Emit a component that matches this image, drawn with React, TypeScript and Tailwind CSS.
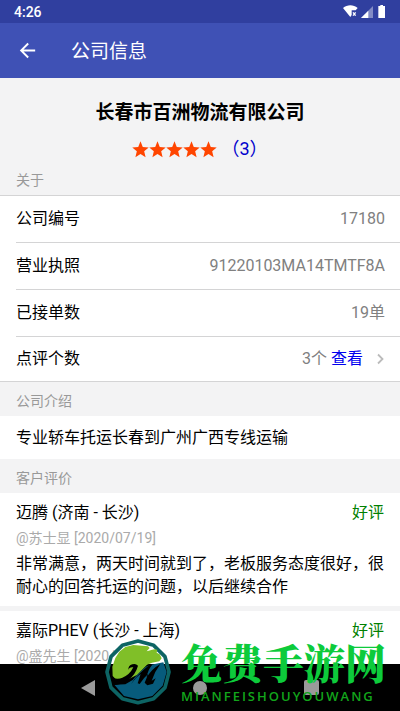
import type { ReactNode } from 'react'

interface Review {
  route: string
  author: string
  rating: string
  text?: string
}

const reviews: Review[] = [
  {
    route: '迈腾 (济南 - 长沙)',
    author: '@苏士显 [2020/07/19]',
    rating: '好评',
    text: '非常满意，两天时间就到了，老板服务态度很好，很耐心的回答托运的问题，以后继续合作',
  },
  {
    route: '嘉际PHEV (长沙 - 上海)',
    author: '@盛先生 [2020/07/18]',
    rating: '好评',
  },
]

function StatusBar() {
  return (
    <div className="flex h-[23px] shrink-0 items-center justify-between bg-[#303f9f] pr-2.5 pl-3.5 text-sm font-medium text-white">
      <span>4:26</span>
      <div className="flex items-center gap-[3px]">
        <svg width="15" height="13" viewBox="0 0 45 39" fill="#fff">
          <path d="M0 9C13-2 31-2 44 9L38 16H26V30L22 36Z" />
          <path d="M30 22l8 10M38 22l-8 10" stroke="#fff" strokeWidth="4" />
        </svg>
        <svg width="12" height="12" viewBox="0 0 36 36" fill="#fff">
          <path d="M36 0V36H0Z" opacity="0.4" />
          <path d="M22 14V36H0Z" />
        </svg>
        <svg width="14" height="13" viewBox="0 0 42 39" fill="#fff">
          <path d="M13 0h8v3h6v36H7V3h6z" />
        </svg>
      </div>
    </div>
  )
}

function AppBar() {
  return (
    <header className="flex h-[55px] shrink-0 items-center gap-8 bg-[#3f51b5] pl-4 text-white">
      <button aria-label="返回" className="flex size-[23px] items-center justify-center">
        <svg width="23" height="23" viewBox="0 0 24 24" fill="#fff">
          <path d="M20 11H7.83l5.59-5.59L12 4l-8 8 8 8 1.41-1.41L7.83 13H20v-2z" />
        </svg>
      </button>
      <h1 className="pt-1 text-[19px]">公司信息</h1>
    </header>
  )
}

function Stars() {
  return (
    <div className="flex">
      {[1, 2, 3, 4, 5].map((n) => (
        <svg key={n} width="17" height="17" viewBox="0 0 24 24" fill="#ff4500">
          <path d="M12 0.5l3.2 7.8 8.4.7-6.4 5.5 2 8.3L12 18.3l-7.2 4.5 2-8.3L.4 9l8.4-.7z" />
        </svg>
      ))}
    </div>
  )
}

function InfoRow({ label, children }: { label: string; children: ReactNode }) {
  return (
    <div className="ml-4 flex h-[47px] items-center justify-between border-b border-[#d4d4d5] pr-[15px] text-base last:h-11 last:border-b-0">
      <dt>{label}</dt>
      <dd className="flex items-center text-[#808080]">{children}</dd>
    </div>
  )
}

function SectionLabel({ children }: { children: ReactNode }) {
  return (
    <h3 className="flex h-[34px] items-center px-4 pt-1 text-sm text-[#999]">{children}</h3>
  )
}

function ReviewItem({ review }: { review: Review }) {
  return (
    <article className="bg-white px-4 pt-2 pb-2">
      <div className="flex justify-between text-base leading-6">
        <h4>{review.route}</h4>
        <span className="text-[#008000]">{review.rating}</span>
      </div>
      <p className="text-sm leading-[27px] text-[#aaa]">{review.author}</p>
      {review.text && <p className="text-base leading-[23px]">{review.text}</p>}
    </article>
  )
}

function NavBar() {
  return (
    <nav className="flex h-[47px] shrink-0 items-center justify-between bg-black px-[81px]">
      <button aria-label="后退">
        <svg width="15" height="16" viewBox="0 0 15 16" fill="#9a9a9a">
          <path d="M14 0v16L0 8z" />
        </svg>
      </button>
      <button aria-label="主页" className="size-3.5 rounded-full bg-[#9a9a9a]" />
      <button aria-label="最近任务" className="size-[15px] rounded-xs bg-[#9a9a9a]" />
    </nav>
  )
}

function Logo() {
  return (
    <svg width="66" height="66" viewBox="9 9 198 198">
      {/* backing: light above, dark below */}
      <path d="M27 84L27 62 61 28 108 15 155 28 189 62 195 84Z" fill="#fff" />
      <path d="M21 84H195L201 108 189 155 155 188 108 200 61 188 27 155 15 108Z" fill="#000" />
      <path
        d="M108 15L155 28 189 62 201 108 189 155 155 188 108 200 61 188 27 155 15 108 27 62 61 28Z"
        fill="none"
        stroke="#0d6464"
        strokeWidth="11"
        strokeLinejoin="round"
      />
      <path
        d="M32 120L31 92 40 66 52 47 70 33 94 27 138 31 143 36 134 46 157 40 166 41 164 50 173 55 179 67 172 76 150 80 135 86 106 116 82 128 40 128Z"
        fill="#80bf28"
      />
      <path
        d="M148 86L184 79 194 108 182 149 151 180 108 190 66 180 37 146 70 145 92 132 104 118 132 92Z"
        fill="#075b7c"
      />
      <g fill="#000">
        <path d="M31 124Q44 134 61 125 83 117 94 94 82 92 79 102 78 89 91 85 101 81 108 89 101 115 79 132 60 146 31 148Z" />
        <path d="M87 145Q101 119 145 85L151 86Q137 101 134 124 150 98 175 84 159 105 149 134L161 127 153 143 136 148 128 140 139 113Q126 124 113 144L107 142 116 114Q104 121 87 145Z" />
      </g>
    </svg>
  )
}

function Watermark() {
  return (
    <div className="pointer-events-none absolute right-3.5 bottom-1.5 flex items-end gap-2.5">
      <Logo />
      <div className="flex flex-col whitespace-nowrap">
        <span className="font-['Noto_Serif_CJK_SC','Noto_Sans_CJK_SC',serif] text-[41px] leading-[50px] font-black text-[#0dcb3b]">
          免费手游网
        </span>
        <span className="font-['Open_Sans'] text-[13px] leading-[18px] font-semibold tracking-[2px] text-[#12a51b]">
          MIANFEISHOUYOUWANG
        </span>
      </div>
    </div>
  )
}

export default function App() {
  return (
    <div className="relative flex h-screen flex-col bg-[#f3f3f4] font-[Roboto,'Noto_Sans_CJK_SC',sans-serif] text-black">
      <StatusBar />
      <AppBar />

      <main className="min-h-0 flex-1 overflow-y-auto [scrollbar-width:none]">
        {/* Company summary */}
        <section className="flex flex-col items-center pt-[21px]">
          <h2 className="text-[19px] leading-7 font-bold">长春市百洲物流有限公司</h2>
          <div className="mt-2.5 flex h-6 items-center gap-1">
            <Stars />
            <a href="#reviews" className="text-lg text-[#0000cd]">
              （3）
            </a>
          </div>
        </section>

        {/* Details */}
        <SectionLabel>关于</SectionLabel>
        <dl className="border-y border-[#d4d4d5] bg-white">
          <InfoRow label="公司编号">17180</InfoRow>
          <InfoRow label="营业执照">91220103MA14TMTF8A</InfoRow>
          <InfoRow label="已接单数">19单</InfoRow>
          <InfoRow label="点评个数">
            3个
            <a href="#reviews" className="ml-1 text-[#0000ee]">
              查看
            </a>
            <svg className="ml-3.5" width="8" height="12" viewBox="0 0 8 12" fill="none" stroke="#bbb" strokeWidth="1.8">
              <path d="M1 1.5L5.5 6 1 10.5" />
            </svg>
          </InfoRow>
        </dl>

        <SectionLabel>公司介绍</SectionLabel>
        <p className="bg-white px-4 py-2.5 text-base leading-[23px]">专业轿车托运长春到广州广西专线运输</p>

        {/* Reviews */}
        <SectionLabel>客户评价</SectionLabel>
        <div id="reviews" className="flex flex-col gap-[5px]">
          {reviews.map((review) => (
            <ReviewItem key={review.route} review={review} />
          ))}
        </div>
      </main>

      <NavBar />
      <Watermark />
    </div>
  )
}
